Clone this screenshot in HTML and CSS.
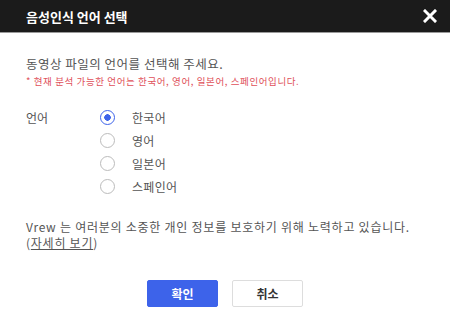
FILE: index.html
```html
<!DOCTYPE html>
<html>
<head>
    <meta charset="UTF-8">
    <title>음성인식 언어 선택</title>
    <link rel="stylesheet" href="styles.css">
</head>
<body>
<div class="dialog">
    <div class="header">
        <span class="title">음성인식 언어 선택</span>
        <svg class="close" width="14" height="14" viewBox="0 0 14 14">
            <path d="M2 2 L12 12 M12 2 L2 12" stroke="#fff" stroke-width="3" stroke-linecap="square"/>
        </svg>
    </div>
    <div class="body">
        <p class="intro">동영상 파일의 언어를 선택해 주세요.</p>
        <p class="note">* 현재 분석 가능한 언어는 한국어, 영어, 일본어, 스페인어입니다.</p>
        <div class="langrow">
            <span class="label">언어</span>
            <div class="options">
                <label class="option"><span class="radio checked"></span>한국어</label>
                <label class="option"><span class="radio"></span>영어</label>
                <label class="option"><span class="radio"></span>일본어</label>
                <label class="option"><span class="radio"></span>스페인어</label>
            </div>
        </div>
        <p class="privacy">Vrew 는 여러분의 소중한 개인 정보를 보호하기 위해 노력하고 있습니다.<br>(<a href="#">자세히 보기</a>)</p>
        <div class="buttons">
            <button class="btn primary">확인</button>
            <button class="btn">취소</button>
        </div>
    </div>
</div>
</body>
</html>
```
FILE: styles.css
```css
body{
    margin: 0;
    background: #fff;
    font-family: "Noto Sans CJK KR", "Noto Sans", sans-serif;
}
.dialog{
    width: 450px;
    height: 330px;
}
.header{
    height: 32px;
    background: #1b1b1b;
    border-bottom: 1px solid #9a9a9a;
    display: flex;
    align-items: center;
    justify-content: space-between;
    padding: 0 13px 0 26px;
}
.title{
    color: #fff;
    font-size: 13px;
    font-weight: bold;
}
.close{
    display: block;
}
.body{
    padding: 0 26px;
}
.intro{
    margin: 21px 0 0;
    font-size: 12.5px;
    letter-spacing: 0.5px;
    color: #555;
    line-height: 20px;
}
.note{
    margin: 0;
    font-size: 9.5px;
    letter-spacing: 0.6px;
    color: #e0505a;
    line-height: 14px;
}
.langrow{
    display: flex;
    margin-top: 18px;
}
.label{
    width: 74px;
    font-size: 12px;
    color: #555;
    line-height: 23px;
}
.options{
    display: flex;
    flex-direction: column;
}
.option{
    display: flex;
    align-items: center;
    height: 23px;
    font-size: 12px;
    letter-spacing: 0.3px;
    color: #555;
}
.radio{
    width: 15px;
    height: 15px;
    border: 1px solid #bbb;
    border-radius: 50%;
    margin-right: 17px;
    box-sizing: border-box;
}
.radio.checked{
    border-color: #3d63ea;
    background: radial-gradient(circle, #3d63ea 0 3px, #fff 3.5px);
}
.privacy{
    margin: 21px 0 0;
    font-size: 12px;
    letter-spacing: 0.75px;
    color: #555;
    line-height: 16px;
}
.privacy a{
    color: #555;
}
.buttons{
    display: flex;
    justify-content: center;
    gap: 14px;
    margin-top: 29px;
}
.btn{
    width: 71px;
    height: 27px;
    border: 1px solid #ddd;
    background: #fff;
    border-radius: 2px;
    font-family: inherit;
    font-size: 12px;
    font-weight: bold;
    color: #333;
}
.btn.primary{
    background: #3d63ea;
    border-color: #3d63ea;
    color: #fff;
}
```
